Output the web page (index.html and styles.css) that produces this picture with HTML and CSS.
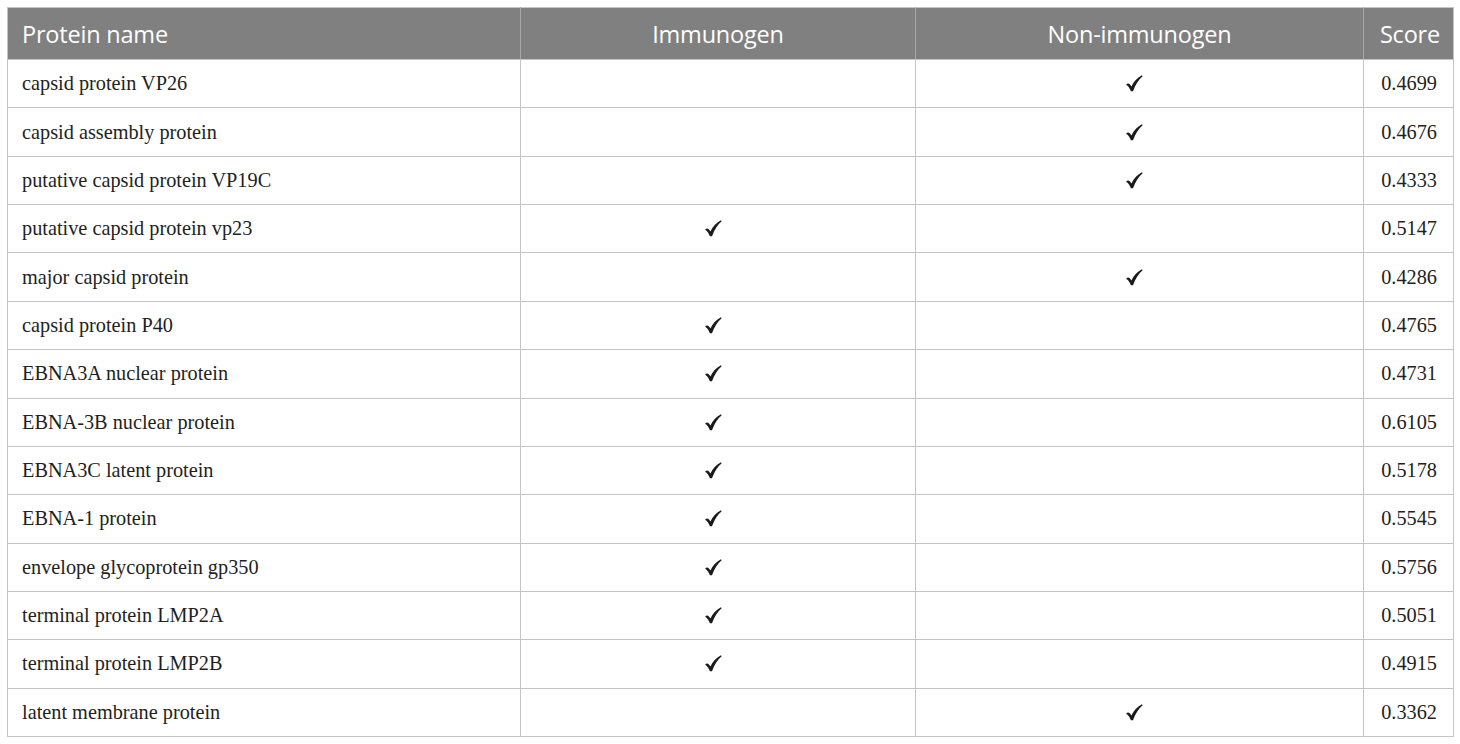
FILE: index.html
```html
<!DOCTYPE html>
<html>
<head>
<meta charset="utf-8">
<link rel="stylesheet" href="styles.css">
</head>
<body>
<svg width="0" height="0" class="defs" aria-hidden="true">
  <defs>
    <symbol id="check" viewBox="0 0 16 16">
      <path d="M0.4 8.8 C2.2 7.2 3.6 8.6 5.1 10.8 C7.4 6.2 10.3 2.8 15 0.2 L15.7 1.1 C11.9 4.4 8.9 8.8 6.6 15.4 L4.6 15.4 C3.6 12.6 2.3 10.6 0.4 9.4 Z" fill="#1a1a1a"/>
    </symbol>
  </defs>
</svg>
<table class="tbl">
  <colgroup>
    <col class="c1"><col class="c2"><col class="c3"><col class="c4">
  </colgroup>
  <thead>
    <tr><th class="left">Protein name</th><th>Immunogen</th><th>Non-immunogen</th><th class="right">Score</th></tr>
  </thead>
  <tbody>
    <tr><td>capsid protein VP26</td><td></td><td class="ck"><svg class="mark"><use href="#check"/></svg></td><td class="num">0.4699</td></tr>
    <tr><td>capsid assembly protein</td><td></td><td class="ck"><svg class="mark"><use href="#check"/></svg></td><td class="num">0.4676</td></tr>
    <tr><td>putative capsid protein VP19C</td><td></td><td class="ck"><svg class="mark"><use href="#check"/></svg></td><td class="num">0.4333</td></tr>
    <tr><td>putative capsid protein vp23</td><td class="ck"><svg class="mark"><use href="#check"/></svg></td><td></td><td class="num">0.5147</td></tr>
    <tr><td>major capsid protein</td><td></td><td class="ck"><svg class="mark"><use href="#check"/></svg></td><td class="num">0.4286</td></tr>
    <tr><td>capsid protein P40</td><td class="ck"><svg class="mark"><use href="#check"/></svg></td><td></td><td class="num">0.4765</td></tr>
    <tr><td>EBNA3A nuclear protein</td><td class="ck"><svg class="mark"><use href="#check"/></svg></td><td></td><td class="num">0.4731</td></tr>
    <tr><td>EBNA-3B nuclear protein</td><td class="ck"><svg class="mark"><use href="#check"/></svg></td><td></td><td class="num">0.6105</td></tr>
    <tr><td>EBNA3C latent protein</td><td class="ck"><svg class="mark"><use href="#check"/></svg></td><td></td><td class="num">0.5178</td></tr>
    <tr><td>EBNA-1 protein</td><td class="ck"><svg class="mark"><use href="#check"/></svg></td><td></td><td class="num">0.5545</td></tr>
    <tr><td>envelope glycoprotein gp350</td><td class="ck"><svg class="mark"><use href="#check"/></svg></td><td></td><td class="num">0.5756</td></tr>
    <tr><td>terminal protein LMP2A</td><td class="ck"><svg class="mark"><use href="#check"/></svg></td><td></td><td class="num">0.5051</td></tr>
    <tr><td>terminal protein LMP2B</td><td class="ck"><svg class="mark"><use href="#check"/></svg></td><td></td><td class="num">0.4915</td></tr>
    <tr><td>latent membrane protein</td><td></td><td class="ck"><svg class="mark"><use href="#check"/></svg></td><td class="num">0.3362</td></tr>
  </tbody>
</table>
</body>
</html>
```
FILE: styles.css
```css
html, body {
  margin: 0;
  padding: 0;
  background: #ffffff;
}
body {
  padding: 7px 0 0 7px;
}
.defs {
  position: absolute;
  width: 0;
  height: 0;
  overflow: hidden;
}
.tbl {
  border-collapse: collapse;
  table-layout: fixed;
  width: 1446px;
  border: 1px solid #c4c4c4;
}
.c1 { width: 513px; }
.c2 { width: 395px; }
.c3 { width: 448px; }
.c4 { width: 90px; }
.tbl th {
  background: #808080;
  color: #ffffff;
  font-family: "Open Sans", "Noto Sans", sans-serif;
  font-weight: 400;
  font-size: 23.5px;
  letter-spacing: -0.2px;
  height: 52px;
  padding: 0 14px;
  text-align: center;
  border-left: 1px solid #a8a8a8;
  border-bottom: 1px solid #c4c4c4;
  box-sizing: border-box;
}
.tbl th:first-child { border-left: none; }
.tbl th.left { text-align: left; }
.tbl th.right { text-align: right; padding-right: 13px; }
.tbl td {
  font-family: "Liberation Serif", "Times New Roman", serif;
  font-size: 20.3px;
  color: #231f20;
  height: 48.36px;
  padding: 0 14px;
  border: 1px solid #c4c4c4;
  box-sizing: border-box;
  vertical-align: middle;
}
.tbl td.ck {
  text-align: center;
  padding-right: 24px;
  line-height: 0;
}
.mark {
  width: 17px;
  height: 17px;
  display: inline-block;
  vertical-align: middle;
}
.tbl td.num {
  text-align: right;
  padding-right: 16px;
}
```
